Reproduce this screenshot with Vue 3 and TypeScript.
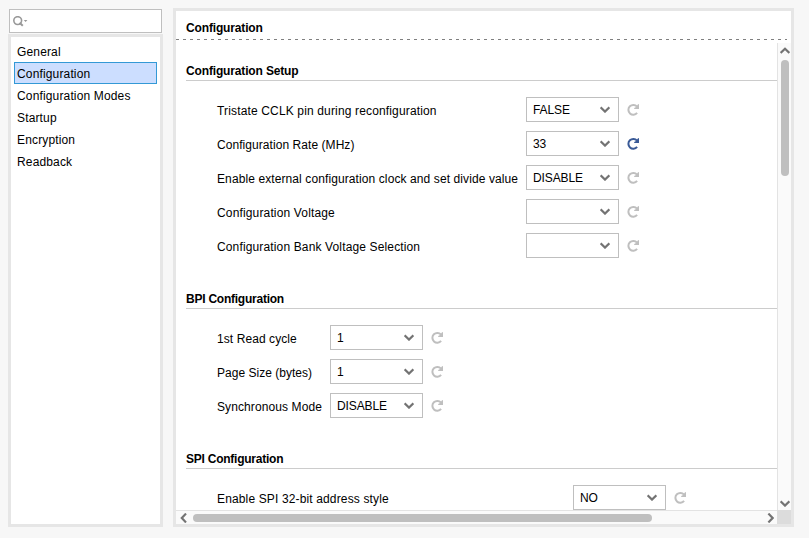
<script setup lang="ts">
interface Option {
  label: string
  value: string
  tracking: number
  changed?: boolean
}
interface Section {
  title: string
  key: string
  options: Option[]
}

const categories: string[] = ['General', 'Configuration', 'Configuration Modes', 'Startup', 'Encryption', 'Readback']
const selected = 'Configuration'

const sections: Section[] = [
  {
    title: 'Configuration Setup',
    key: 'setup',
    options: [
      { label: 'Tristate CCLK pin during reconfiguration', value: 'FALSE', tracking: 0.15 },
      { label: 'Configuration Rate (MHz)', value: '33', tracking: 0.06, changed: true },
      { label: 'Enable external configuration clock and set divide value', value: 'DISABLE', tracking: 0.1 },
      { label: 'Configuration Voltage', value: '', tracking: 0.15 },
      { label: 'Configuration Bank Voltage Selection', value: '', tracking: 0.14 },
    ],
  },
  {
    title: 'BPI Configuration',
    key: 'bpi',
    options: [
      { label: '1st Read cycle', value: '1', tracking: 0.08 },
      { label: 'Page Size (bytes)', value: '1', tracking: 0.02 },
      { label: 'Synchronous Mode', value: 'DISABLE', tracking: 0.1 },
    ],
  },
  {
    title: 'SPI Configuration',
    key: 'spi',
    options: [{ label: 'Enable SPI 32-bit address style', value: 'NO', tracking: 0.14 }],
  },
]
</script>

<template>
  <div class="dialog">
    <aside class="side">
      <div class="search">
        <svg width="16" height="12" viewBox="0 0 16 12">
          <circle cx="4.7" cy="4.6" r="3.9" fill="none" stroke="#999" stroke-width="1.6" />
          <path d="M6.6 6.8L9.8 9.8" stroke="#999" stroke-width="2" />
          <path d="M10.8 4h3.6l-1.8 2z" fill="#999" />
        </svg>
      </div>
      <ul class="list">
        <li v-for="c in categories" :key="c" :class="{ active: c === selected }">{{ c }}</li>
      </ul>
    </aside>

    <main class="panel">
      <header class="head">
        <h1>Configuration</h1>
        <svg class="dash" width="613" height="1"><path d="M0 .5H611" stroke="#808080" stroke-dasharray="3 4" /></svg>
      </header>
      <div class="body">
        <div class="view">
          <section v-for="s in sections" :key="s.key" :class="s.key">
            <h2>{{ s.title }}</h2>
            <div v-for="o in s.options" :key="o.label" class="row">
              <span class="label" :style="{ letterSpacing: o.tracking + 'px' }">{{ o.label }}</span>
              <div class="select">
                <span>{{ o.value }}</span>
                <svg width="10" height="7" viewBox="0 0 10 7"><path d="M.6 1.4L5 5.6L9.4 1.4" fill="none" stroke="#737373" stroke-width="2.2" /></svg>
              </div>
              <svg class="reset" :class="{ changed: o.changed }" width="13" height="13" viewBox="0 0 13 13">
                <path d="M10 3.6A4.9 4.9 0 1 0 10.1 9.9" fill="none" stroke="currentColor" stroke-width="2" />
                <path d="M12 1V6H7.2V4.9L9 4L10.8 1.6z" fill="currentColor" />
              </svg>
            </div>
          </section>
        </div>
        <div class="vbar">
          <svg width="10" height="7" viewBox="0 0 10 7"><path d="M.6 6L5 1.8L9.4 6" fill="none" stroke="#737373" stroke-width="2.2" /></svg>
          <i class="thumb" />
          <svg width="10" height="7" viewBox="0 0 10 7"><path d="M.6 1.4L5 5.6L9.4 1.4" fill="none" stroke="#737373" stroke-width="2.2" /></svg>
        </div>
        <div class="hbar">
          <svg width="7" height="10" viewBox="0 0 7 10"><path d="M6 .6L1.8 5L6 9.4" fill="none" stroke="#737373" stroke-width="2.2" /></svg>
          <i class="thumb" />
          <svg width="7" height="10" viewBox="0 0 7 10"><path d="M1.4 .6L5.6 5L1.4 9.4" fill="none" stroke="#737373" stroke-width="2.2" /></svg>
        </div>
        <div class="corner" />
      </div>
    </main>
  </div>
</template>

<style>
body {
  background: #f7f7f7;
}
</style>

<style scoped>
.dialog {
  box-sizing: border-box;
  width: 809px;
  height: 538px;
  padding: 8px 15px 11px 8px;
  display: flex;
  gap: 10px;
  background: #f7f7f7;
  font: 12px/22px "Liberation Sans", Arial, sans-serif;
  color: #000;
  overflow: hidden;
}
.dialog * {
  box-sizing: border-box;
}
svg {
  display: block;
  flex: none;
}
.side {
  width: 155px;
  display: flex;
  flex-direction: column;
  gap: 1px;
  padding-top: 1px;
}
.search {
  height: 24px;
  margin: 0 1px;
  padding: 6px 3px;
  background: #fff;
  border: 1px solid #bfbfbf;
}
.list {
  flex: 1;
  margin: 0;
  padding: 3px;
  list-style: none;
  background: #fff;
  border: 3px solid #e6e6e6;
}
.list li {
  height: 22px;
  line-height: 22px;
  padding-left: 2px;
  border: 1px solid transparent;
  letter-spacing: 0.15px;
}
.list .active {
  background: #ccdeff;
  border-color: #3399d6;
}
.panel {
  width: 621px;
  display: flex;
  flex-direction: column;
  background: #fff;
  border: 3px solid #e6e6e6;
}
.head {
  height: 32px;
  flex: none;
}
h1,
h2 {
  margin: 0;
  font-size: 12px;
  font-weight: bold;
  letter-spacing: -0.15px;
}
h1 {
  height: 28px;
  padding: 6px 0 0 10px;
}
.body {
  flex: 1;
  min-height: 0;
  display: grid;
  grid-template: minmax(0, 1fr) 14px / 601px 14px;
}
.view {
  overflow: hidden;
  padding: 17px 0 0 10px;
}
h2 {
  height: 21px;
  border-bottom: 1px solid #ccc;
  margin-bottom: 11px;
}
.bpi h2,
.spi h2 {
  letter-spacing: -0.24px;
}
.row {
  height: 34px;
  display: flex;
  align-items: center;
  padding-left: 31px;
}
.label {
  white-space: nowrap;
  padding-top: 3px;
}
.setup .label {
  width: 309px;
}
.bpi .label {
  width: 113px;
}
.spi .label {
  width: 356px;
}
.setup {
  height: 228px;
}
.bpi {
  height: 160px;
}
.select {
  width: 93px;
  height: 25px;
  border: 1px solid #bfbfbf;
  padding: 1px 8px 0 6px;
  display: flex;
  align-items: center;
  justify-content: space-between;
  letter-spacing: -0.1px;
}
.reset {
  margin-left: 8px;
  color: #bfbfbf;
}
.changed {
  color: #3a5a97;
}
.vbar,
.hbar {
  display: flex;
  align-items: center;
  background: #fafafa;
}
.vbar {
  flex-direction: column;
  justify-content: space-between;
  border-left: 1px solid #e3e3e3;
  padding: 4px 0 3px;
}
.hbar {
  border-top: 1px solid #e3e3e3;
  padding: 0 3px 0 4px;
}
.thumb {
  background: #bfbfbf;
  border-radius: 4px;
}
.vbar .thumb {
  width: 8px;
  height: 116px;
  margin: 6px 0 auto;
}
.hbar .thumb {
  width: 459px;
  height: 8px;
  margin: 0 auto 0 6px;
}
.corner {
  background: #dcdcdc;
}
</style>
